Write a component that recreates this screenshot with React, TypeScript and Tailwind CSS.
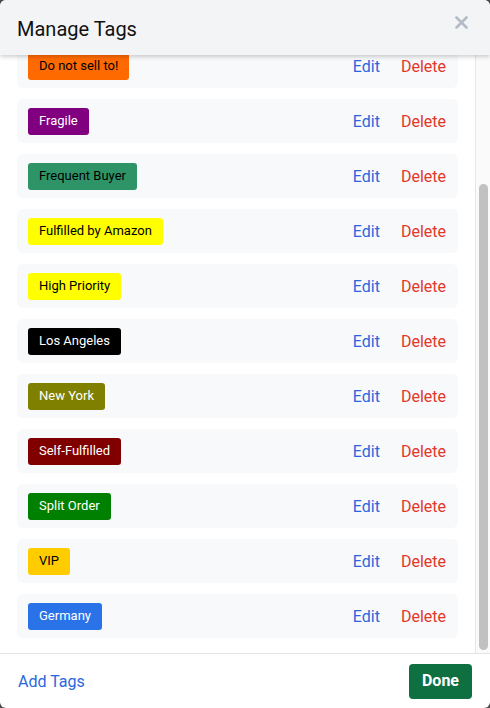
interface Tag {
  name: string;
  bg: string;
  fg: string;
}

const tags: Tag[] = [
  { name: 'Do not sell to!', bg: 'bg-[#ff6a00]', fg: 'text-black' },
  { name: 'Fragile', bg: 'bg-[#800080]', fg: 'text-white' },
  { name: 'Frequent Buyer', bg: 'bg-[#2e9467]', fg: 'text-black' },
  { name: 'Fulfilled by Amazon', bg: 'bg-[#ffff00]', fg: 'text-black' },
  { name: 'High Priority', bg: 'bg-[#ffff00]', fg: 'text-black' },
  { name: 'Los Angeles', bg: 'bg-black', fg: 'text-white' },
  { name: 'New York', bg: 'bg-[#808000]', fg: 'text-white' },
  { name: 'Self-Fulfilled', bg: 'bg-[#800000]', fg: 'text-white' },
  { name: 'Split Order', bg: 'bg-[#008000]', fg: 'text-white' },
  { name: 'VIP', bg: 'bg-[#ffcc00]', fg: 'text-black' },
  { name: 'Germany', bg: 'bg-[#2a72e8]', fg: 'text-white' },
];

function TagRow({ tag }: { tag: Tag }) {
  return (
    <div className="flex h-[44px] shrink-0 items-center justify-between rounded-[6px] bg-[#f8f9fb] pl-[11px] pr-[12px]">
      <span className={`flex h-[27px] items-center rounded-[3px] px-[11px] text-[13px] ${tag.bg} ${tag.fg}`}>
        {tag.name}
      </span>
      <div className="flex items-center gap-[21px] pt-[1px] text-[16px]">
        <button className="text-[#2a66dd]">Edit</button>
        <button className="text-[#e2382a]">Delete</button>
      </div>
    </div>
  );
}

export default function App() {
  return (
    <div className="h-[708px] w-[490px] bg-[#4a4a4a]" style={{ fontFamily: 'Roboto, "Noto Sans", sans-serif' }}>
      <div className="flex h-full w-full flex-col overflow-hidden rounded-[6px] bg-white">
        {/* Header */}
        <div className="relative z-10 flex h-[55px] shrink-0 items-center justify-between bg-[#f3f4f6] pl-[17px] pr-[22px] shadow-[0_2px_4px_rgba(0,0,0,0.18)]">
          <h1 className="pt-[3px] text-[20px] text-[#111]">Manage Tags</h1>
          <button className="mb-[10px] text-[#b3bcc6]">
            <svg width="13" height="13" viewBox="0 0 13 13">
              <path d="M1.5 1.5 L11.5 11.5 M11.5 1.5 L1.5 11.5" stroke="currentColor" strokeWidth="2.6" strokeLinecap="round" />
            </svg>
          </button>
        </div>

        {/* Tag list, scrolled to the bottom */}
        <div className="flex min-h-0 flex-1 border-b border-[#e5e5e5]">
          <div className="flex min-w-0 flex-1 flex-col justify-end gap-[11px] overflow-hidden px-[17px] pb-[15px]">
            {tags.map((t) => (
              <TagRow key={t.name} tag={t} />
            ))}
          </div>
          <div className="flex w-[15px] shrink-0 flex-col border-l border-[#e6e6e6] bg-[#fafafa] pb-[3px] pl-[3px] pt-[129px]">
            <div className="w-[9px] flex-1 rounded-full bg-[#c1c1c1]" />
          </div>
        </div>

        {/* Footer */}
        <div className="flex h-[54px] shrink-0 items-center justify-between pl-[18px] pr-[18px]">
          <button className="pt-[2px] text-[16px] text-[#2a66dd]">Add Tags</button>
          <button className="h-[35px] rounded-[4px] bg-[#0e7040] px-[13px] text-[16px] font-bold text-white">Done</button>
        </div>
      </div>
    </div>
  );
}
